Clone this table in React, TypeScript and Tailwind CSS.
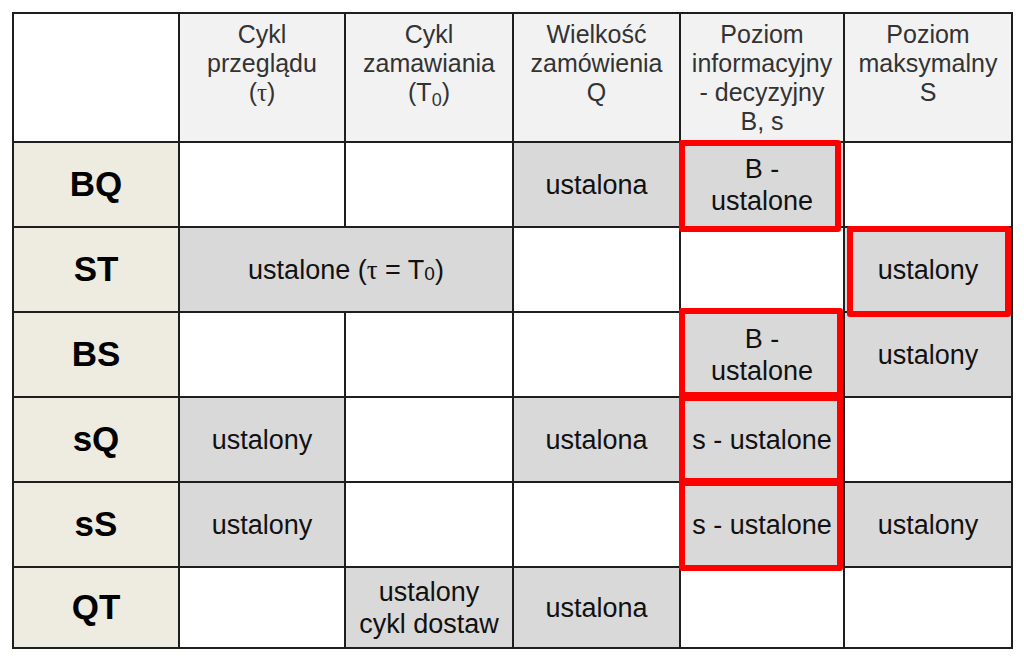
import React from 'react';

type Cell = {
  text?: React.ReactNode;
  gray?: boolean;
  span?: boolean;
  mark?: string; // inset classes for the red frame
};

type Row = { name: string; cells: Cell[] };

// tau in the source comes from the Symbol font, so it has a serif look
const Tau: React.FC = () => <span style={{ fontFamily: '"Liberation Serif", "Times New Roman", serif' }}>τ</span>;

const rows: Row[] = [
  {
    name: 'BQ',
    cells: [
      {},
      {},
      { text: 'ustalona', gray: true },
      { text: <>B -<br />ustalone</>, gray: true, mark: 'left-[-2px] right-[2px] top-[-3px] bottom-[-6px]' },
      {},
    ],
  },
  {
    name: 'ST',
    cells: [
      { text: <>ustalone (<Tau />{'\u00a0'}= T<sub className="text-[19px]">0</sub>)</>, gray: true, span: true },
      {},
      {},
      { text: 'ustalony', gray: true, mark: 'left-[2px] right-0 top-[-2px] bottom-[-6px]' },
    ],
  },
  {
    name: 'BS',
    cells: [
      {},
      {},
      {},
      { text: <>B -<br />ustalone</>, gray: true, mark: 'left-[-2px] right-0 top-[-5px] bottom-[-2px]' },
      { text: 'ustalony', gray: true },
    ],
  },
  {
    name: 'sQ',
    cells: [
      { text: 'ustalony', gray: true },
      {},
      { text: 'ustalona', gray: true },
      { text: 's - ustalone', gray: true, mark: 'left-[-2px] right-0 top-[-3px] bottom-[-3px]' },
      {},
    ],
  },
  {
    name: 'sS',
    cells: [
      { text: 'ustalony', gray: true },
      {},
      {},
      { text: 's - ustalone', gray: true, mark: 'left-[-2px] right-0 top-[-3px] bottom-[-5px]' },
      { text: 'ustalony', gray: true },
    ],
  },
  {
    name: 'QT',
    cells: [
      {},
      { text: <>ustalony<br />cykl dostaw</>, gray: true },
      { text: 'ustalona', gray: true },
      {},
      {},
    ],
  },
];

const headers: React.ReactNode[] = [
  <>Cykl<br />przeglądu<br />(<Tau />)</>,
  <>Cykl<br />zamawiania<br />(T<sub className="text-[18px]">0</sub>)</>,
  <>Wielkość<br />zamówienia<br />Q</>,
  <>Poziom<br />informacyjny<br />- decyzyjny<br />B, s</>,
  <>Poziom<br />maksymalny<br />S</>,
];

const App: React.FC = () => {
  return (
    <div className="w-[1024px] h-[658px] bg-white pl-[12px] pt-[12px]" style={{ fontFamily: '"Liberation Sans", Arial, sans-serif' }}>
      <div className="inline-grid bg-[#1e1e1e] p-[2px] gap-[2px] grid-cols-[164px_164px_166px_165px_162px_166px] grid-rows-[127px_83px_83px_83px_83px_83px_79px]">
        {/* header row */}
        <div className="bg-white" />
        {headers.map((h, i) => (
          <div key={i} className="bg-[#f2f2f2] pt-[6px] text-center text-[25px] leading-[29px] text-[#333333]">
            {h}
          </div>
        ))}

        {rows.map(row => (
          <React.Fragment key={row.name}>
            <div className="bg-[#eeece1] flex items-center justify-center text-[35px] font-bold text-black">
              {row.name}
            </div>
            {row.cells.map((c, i) => (
              <div
                key={i}
                className={`relative flex items-center justify-center text-center text-[27px] leading-[32px] text-[#111111] ${c.gray ? 'bg-[#d9d9d9]' : 'bg-white'} ${c.span ? 'col-span-2' : ''}`}
              >
                {c.text}
                {c.mark && (
                  <div className={`pointer-events-none absolute z-10 border-[6px] border-[#ff0000] rounded-[3px] ${c.mark}`} />
                )}
              </div>
            ))}
          </React.Fragment>
        ))}
      </div>
    </div>
  );
};

export default App;
